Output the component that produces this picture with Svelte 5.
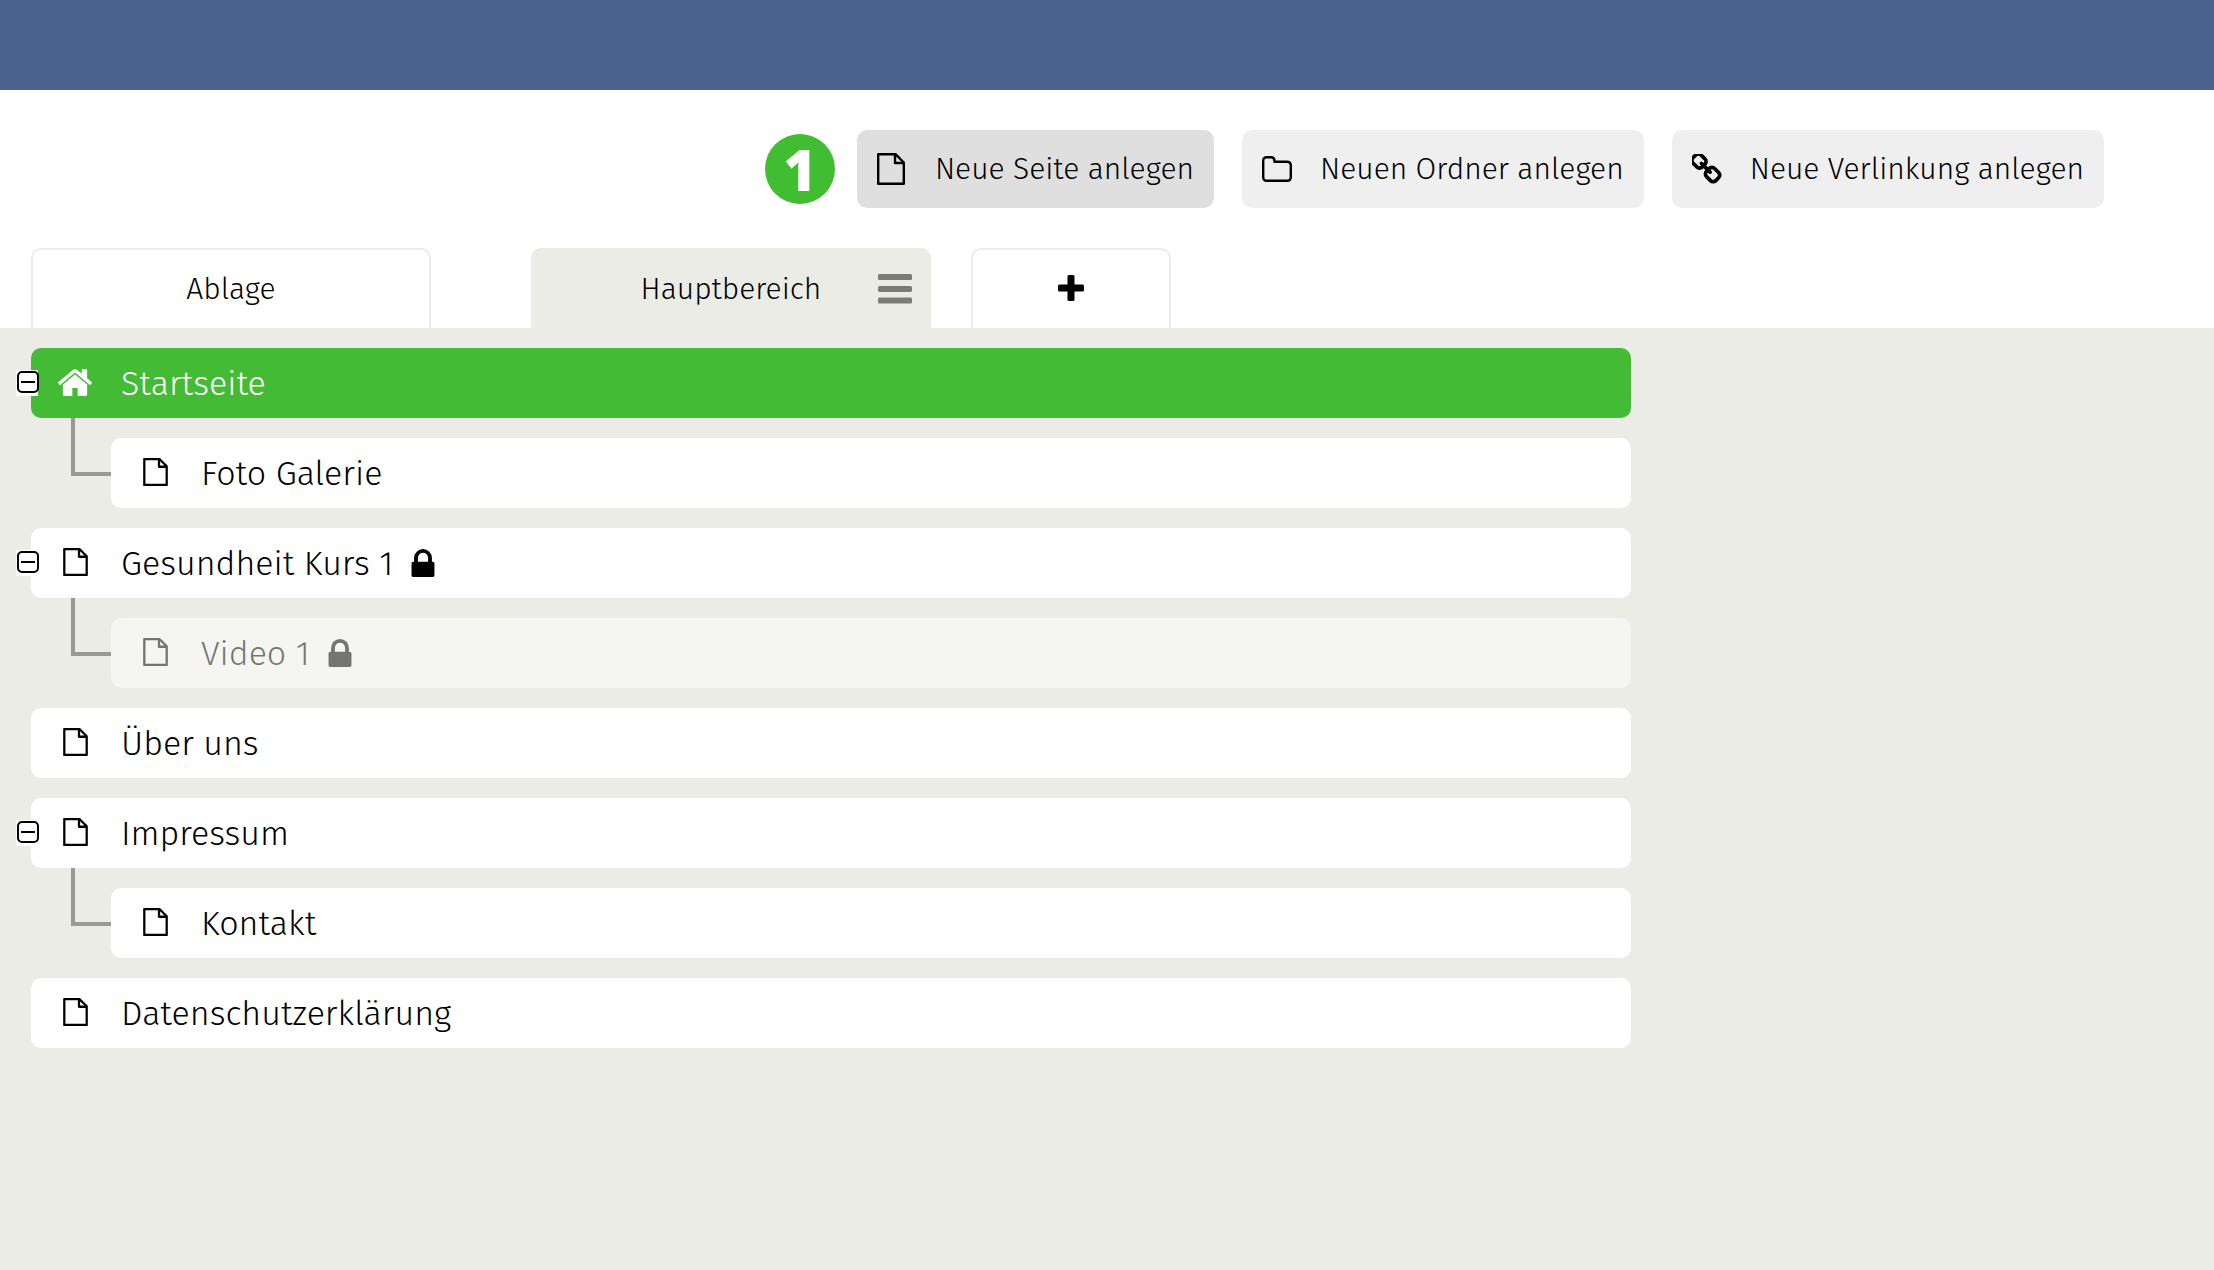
<script>
	let activeTab = "hauptbereich"
	let selected = "Startseite"

	const actions = [
		{label: "Neue Seite anlegen", icon: "file", active: true},
		{label: "Neuen Ordner anlegen", icon: "folder", active: false},
		{label: "Neue Verlinkung anlegen", icon: "link", active: false},
	]

	let pages = [
		{name: "Startseite", home: true, open: true, children: [
			{name: "Foto Galerie"},
		]},
		{name: "Gesundheit Kurs 1", locked: true, open: true, children: [
			{name: "Video 1", locked: true, hidden: true},
		]},
		{name: "Über uns", children: []},
		{name: "Impressum", open: true, children: [
			{name: "Kontakt"},
		]},
		{name: "Datenschutzerklärung", children: []},
	]
</script>

{#snippet fileIcon()}
	<svg class="file" viewBox="0 0 28 32" aria-hidden="true">
		<path d="M1.2 1.2H18.5L26.8 9.5V30.8H1.2ZM18 1.2V10H26.8" />
	</svg>
{/snippet}

{#snippet row(page)}
	<a href="#{page.name}" class="row" class:selected={selected === page.name} class:hidden={page.hidden} onclick={() => selected = page.name}>
		<span class="rowIcon">
			{#if page.home}
				<svg class="home" viewBox="88 253 1616 1283" aria-hidden="true">
					<path d="M1472 992v480q0 26-19 45t-45 19h-384v-384h-256v384h-384q-26 0-45-19t-19-45v-480q0-1 .5-3t.5-3l575-474 575 474q1 2 1 6zm223-69l-62 74q-8 9-21 11h-3q-13 0-21-7l-692-577-692 577q-12 8-24 7-13-2-21-11l-62-74q-8-10-7-23.5t11-21.5l719-599q32-26 76-26t76 26l244 204v-195q0-14 9-23t23-9h192q14 0 23 9t9 23v408l219 182q10 8 11 21.5t-7 23.5z" />
				</svg>
			{:else}
				{@render fileIcon()}
			{/if}
		</span>
		<span class="name">{page.name}</span>
		{#if page.locked}
			<svg class="lock" viewBox="320 128 1152 1408" aria-hidden="true">
				<path d="M640 768h512v-192q0-106-75-181t-181-75-181 75-75 181v192zm832 96v576q0 40-28 68t-68 28h-960q-40 0-68-28t-28-68v-576q0-40 28-68t68-28h32v-192q0-184 132-316t316-132 316 132 132 316v192h32q40 0 68 28t28 68z" />
			</svg>
		{/if}
	</a>
{/snippet}

<div class="page">
	<header class="topBar"></header>

	<div class="toolbar">
		<span class="step">1</span>
		<div class="actions">
			{#each actions as action (action.label)}
				<button class={action.active ? "action active" : "action"}>
					<span class="actionIcon">
						{#if action.icon === "file"}
							{@render fileIcon()}
						{:else if action.icon === "folder"}
							<svg class="folder" viewBox="0 0 30 26" aria-hidden="true">
								<path d="M1.2 5Q1.2 1.2 5 1.2H9Q12.5 1.2 12.5 5V5.8H25Q28.8 5.8 28.8 9.6V21Q28.8 24.8 25 24.8H5Q1.2 24.8 1.2 21Z" />
							</svg>
						{:else}
							<svg class="link" viewBox="120 120 1552 1552" aria-hidden="true">
								<path d="M1456 1216q0-40-28-68l-208-208q-28-28-68-28-42 0-72 32 3 3 19 18.5t21.5 21.5 15 19 13 25.5 3.5 27.5q0 40-28 68t-68 28q-15 0-27.5-3.5t-25.5-13-19-15-21.5-21.5-18.5-19q-33 31-33 73 0 40 28 68l206 207q27 27 68 27 40 0 68-26l147-146q28-28 28-67zm-703-705q0-40-28-68l-206-207q-28-28-68-28-39 0-68 27l-147 146q-28 28-28 67 0 40 28 68l208 208q27 27 68 27 42 0 72-31-3-3-19-18.5t-21.5-21.5-15-19-13-25.5-3.5-27.5q0-40 28-68t68-28q15 0 27.5 3.5t25.5 13 19 15 21.5 21.5 18.5 19q33-31 33-73zm895 705q0 120-85 203l-147 146q-83 83-203 83-121 0-204-85l-206-207q-83-83-83-203 0-123 88-209l-88-88q-86 88-208 88-120 0-204-84l-208-208q-84-84-84-204t85-203l147-146q83-83 203-83 121 0 204 85l206 207q83 83 83 203 0 123-88 209l88 88q86-88 208-88 120 0 204 84l208 208q84 84 84 204z" />
							</svg>
						{/if}
					</span>
					{action.label}
				</button>
			{/each}
		</div>
	</div>

	<nav class="tabs">
		<button class="tab" class:current={activeTab === "ablage"} onclick={() => activeTab = "ablage"}>Ablage</button>
		<div class="tab" class:current={activeTab === "hauptbereich"}>
			<button class="tabLabel" onclick={() => activeTab = "hauptbereich"}>Hauptbereich</button>
			<button class="tabMenu" aria-label="Menü">
				<svg viewBox="0 0 34 30" aria-hidden="true">
					<rect width="34" height="6" rx="1.5" />
					<rect y="12" width="34" height="6" rx="1.5" />
					<rect y="23.5" width="34" height="6" rx="1.5" />
				</svg>
			</button>
		</div>
		<button class="tab add" aria-label="Bereich hinzufügen">
			<svg viewBox="0 0 26 28" aria-hidden="true">
				<rect x="9.5" width="7" height="26" rx="1.5" />
				<rect y="9.5" width="26" height="7" rx="1.5" />
			</svg>
		</button>
	</nav>

	<main class="panel">
		<ul class="tree">
			{#each pages as page (page.name)}
				<li>
					{@render row(page)}
					{#if page.children.length}
						<button class="toggle" aria-label="{page.name} auf- oder zuklappen" aria-expanded={page.open} onclick={() => page.open = !page.open}>
							<svg viewBox="0 0 24 26" aria-hidden="true">
								<rect class="back" width="22" height="26" />
								<rect class="box" x="2" y="2" width="20" height="20" rx="4" />
								<path d={page.open ? "M5 12H19" : "M5 12H19M12 5V19"} />
							</svg>
						</button>
					{/if}
				</li>
				{#if page.open}
					{#each page.children as child (child.name)}
						<li class="child">{@render row(child)}</li>
					{/each}
				{/if}
			{/each}
		</ul>
	</main>
</div>

<style>
	:global(body) {
		margin: 0;
		background-color: #ffffff;
	}

	.page {
		display: flex;
		flex-direction: column;
		min-height: 100vh;
		font-family: "Fira Sans", "Noto Sans", sans-serif;
		font-weight: 300;
		font-size: 30px;
		color: #000000;
	}

	button {
		margin: 0;
		padding: 0;
		border: none;
		background: none;
		font: inherit;
		color: inherit;
		cursor: pointer;
	}

	svg {
		display: block;
		flex: none;
		fill: currentColor;
	}

	.topBar {
		height: 90px;
		background-color: #4c628e;
	}

	.toolbar {
		display: flex;
		justify-content: flex-end;
		align-items: center;
		gap: 22px;
		padding: 40px 110px 40px 31px;
	}

	.step {
		display: flex;
		align-items: center;
		justify-content: center;
		width: 70px;
		height: 70px;
		border-radius: 50%;
		background-color: #40bd31;
		color: #ffffff;
		font-family: "Open Sans", sans-serif;
		font-size: 56px;
		font-weight: 800;
		line-height: 68px;
	}

	.actions {
		display: flex;
		gap: 28px;
	}

	.action {
		display: flex;
		align-items: center;
		gap: 28px;
		height: 78px;
		padding: 0 20px;
		border-radius: 10px;
		background-color: #efefef;
		white-space: nowrap;
	}

	.action.active {
		background-color: #dfdfdf;
	}

	.actionIcon {
		width: 30px;
	}

	.file, .folder {
		fill: none;
		stroke: currentColor;
		stroke-width: 2.4;
		stroke-linejoin: round;
	}

	.file {
		width: 28px;
		height: 32px;
	}

	.folder {
		width: 30px;
		height: 26px;
	}

	.link {
		width: 30px;
		height: 30px;
	}

	.tabs {
		display: flex;
		gap: 40px;
		padding: 0 31px;
	}

	.tab {
		display: flex;
		align-items: center;
		justify-content: center;
		position: relative;
		box-sizing: border-box;
		width: 400px;
		height: 80px;
		border: 2px solid #ececec;
		border-bottom: none;
		border-radius: 10px 10px 0 0;
	}

	.tab:first-child {
		margin-right: 60px;
	}

	.tab.current {
		border-color: #ebece6;
		background-color: #ebece6;
	}

	.tab.add {
		width: 200px;
	}

	.tab.add svg {
		width: 26px;
		height: 28px;
	}

	.tabMenu {
		position: absolute;
		right: 17px;
		color: #7b7c76;
	}

	.tabMenu svg {
		width: 34px;
		height: 30px;
	}

	.panel {
		flex: 1;
		padding: 20px 31px;
		background-color: #ebece6;
	}

	.tree {
		display: flex;
		flex-direction: column;
		gap: 20px;
		max-width: 1600px;
		margin: 0;
		padding: 0;
		list-style: none;
	}

	li {
		position: relative;
	}

	.child {
		margin-left: 80px;
	}

	/* connector from the parent row */
	.child::before {
		content: "";
		position: absolute;
		left: -40px;
		top: -20px;
		box-sizing: border-box;
		width: 40px;
		height: 58px;
		border-left: 4px solid #999a94;
		border-bottom: 4px solid #999a94;
	}

	.row {
		display: flex;
		align-items: center;
		height: 70px;
		padding: 0 20px;
		border-radius: 10px;
		background-color: #ffffff;
		color: inherit;
		font-size: 34px;
		text-decoration: none;
	}

	.row.selected {
		background-color: #44bb34;
		color: #ffffff;
	}

	.row.hidden {
		opacity: 0.5;
	}

	.rowIcon {
		display: flex;
		justify-content: center;
		width: 48px;
		margin-right: 22px;
		padding-bottom: 2px;
	}

	.row .file {
		width: 25px;
		height: 28px;
		stroke-width: 2.6;
	}

	.home {
		width: 34px;
		height: 27px;
	}

	.lock {
		width: 24px;
		height: 28px;
		margin-left: 18px;
	}

	.toggle {
		position: absolute;
		left: -15px;
		top: 22px;
	}

	.toggle svg {
		width: 24px;
		height: 26px;
	}

	.back {
		fill: #ffffff;
	}

	.box {
		fill: #ffffff;
		stroke: #000000;
		stroke-width: 2;
	}

	.toggle path {
		stroke: #000000;
		stroke-width: 2;
	}
</style>
